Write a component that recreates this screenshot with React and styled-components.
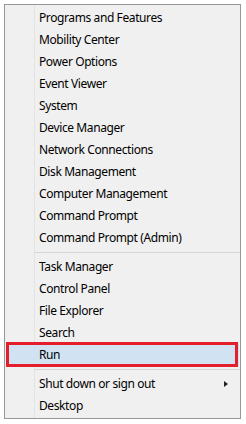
import React from 'react';
import styled, { createGlobalStyle } from 'styled-components';

const GlobalStyle = createGlobalStyle`
  body {
    margin: 0;
    background: #ffffff;
    font-family: 'Noto Sans', 'Liberation Sans', sans-serif;
  }
`;

const groups = [
  [
    'Programs and Features',
    'Mobility Center',
    'Power Options',
    'Event Viewer',
    'System',
    'Device Manager',
    'Network Connections',
    'Disk Management',
    'Computer Management',
    'Command Prompt',
    'Command Prompt (Admin)',
  ],
  ['Task Manager', 'Control Panel', 'File Explorer', 'Search', 'Run'],
  ['Shut down or sign out', 'Desktop'],
];

const App = () => {
  return (
    <>
      <GlobalStyle />
      <Menu>
        {groups.map((items, gi) => (
          <React.Fragment key={gi}>
            {gi > 0 && <Separator />}
            {items.map((label) => (
              <Item key={label} active={label === 'Run'}>
                <span>{label}</span>
                {label === 'Shut down or sign out' && <Arrow />}
              </Item>
            ))}
          </React.Fragment>
        ))}
      </Menu>
    </>
  );
};

const Menu = styled.div`
  display: flex;
  flex-direction: column;
  width: 235px;
  margin: 4px 0 0 4px;
  padding: 2px 0 1px;
  border: 1px solid #979797;
  background-color: #f0f0f0;
  background-image: linear-gradient(#e2e3e3, #e2e3e3);
  background-size: 1px 100%;
  background-position: 29px 0;
  background-repeat: no-repeat;
`;

const Item = styled.div`
  position: relative;
  display: flex;
  align-items: center;
  justify-content: space-between;
  height: 22px;
  margin: 0 ${({ active }) => (active ? '1px' : '0')};
  padding: 0 12px 0 ${({ active }) => (active ? '33px' : '34px')};
  background-color: ${({ active }) => (active ? '#d1e3f3' : 'transparent')};
  color: #000000;
  font-size: 12px;
  letter-spacing: -0.4px;
  line-height: 22px;
  white-space: nowrap;

  ${({ active }) =>
    active &&
    `
    &::after {
      content: '';
      position: absolute;
      top: -2px;
      right: 1px;
      bottom: -1px;
      left: 0;
      border: 3px solid #e41f2b;
    }
  `}
`;

const Separator = styled.div`
  height: 7px;
  margin-left: 30px;
  background: linear-gradient(#d7d7d7, #d7d7d7) no-repeat 0 3px / 100% 1px;
`;

const Arrow = styled.span`
  width: 0;
  height: 0;
  border-top: 3.5px solid transparent;
  border-bottom: 3.5px solid transparent;
  border-left: 4px solid #222222;
`;

export default App;
